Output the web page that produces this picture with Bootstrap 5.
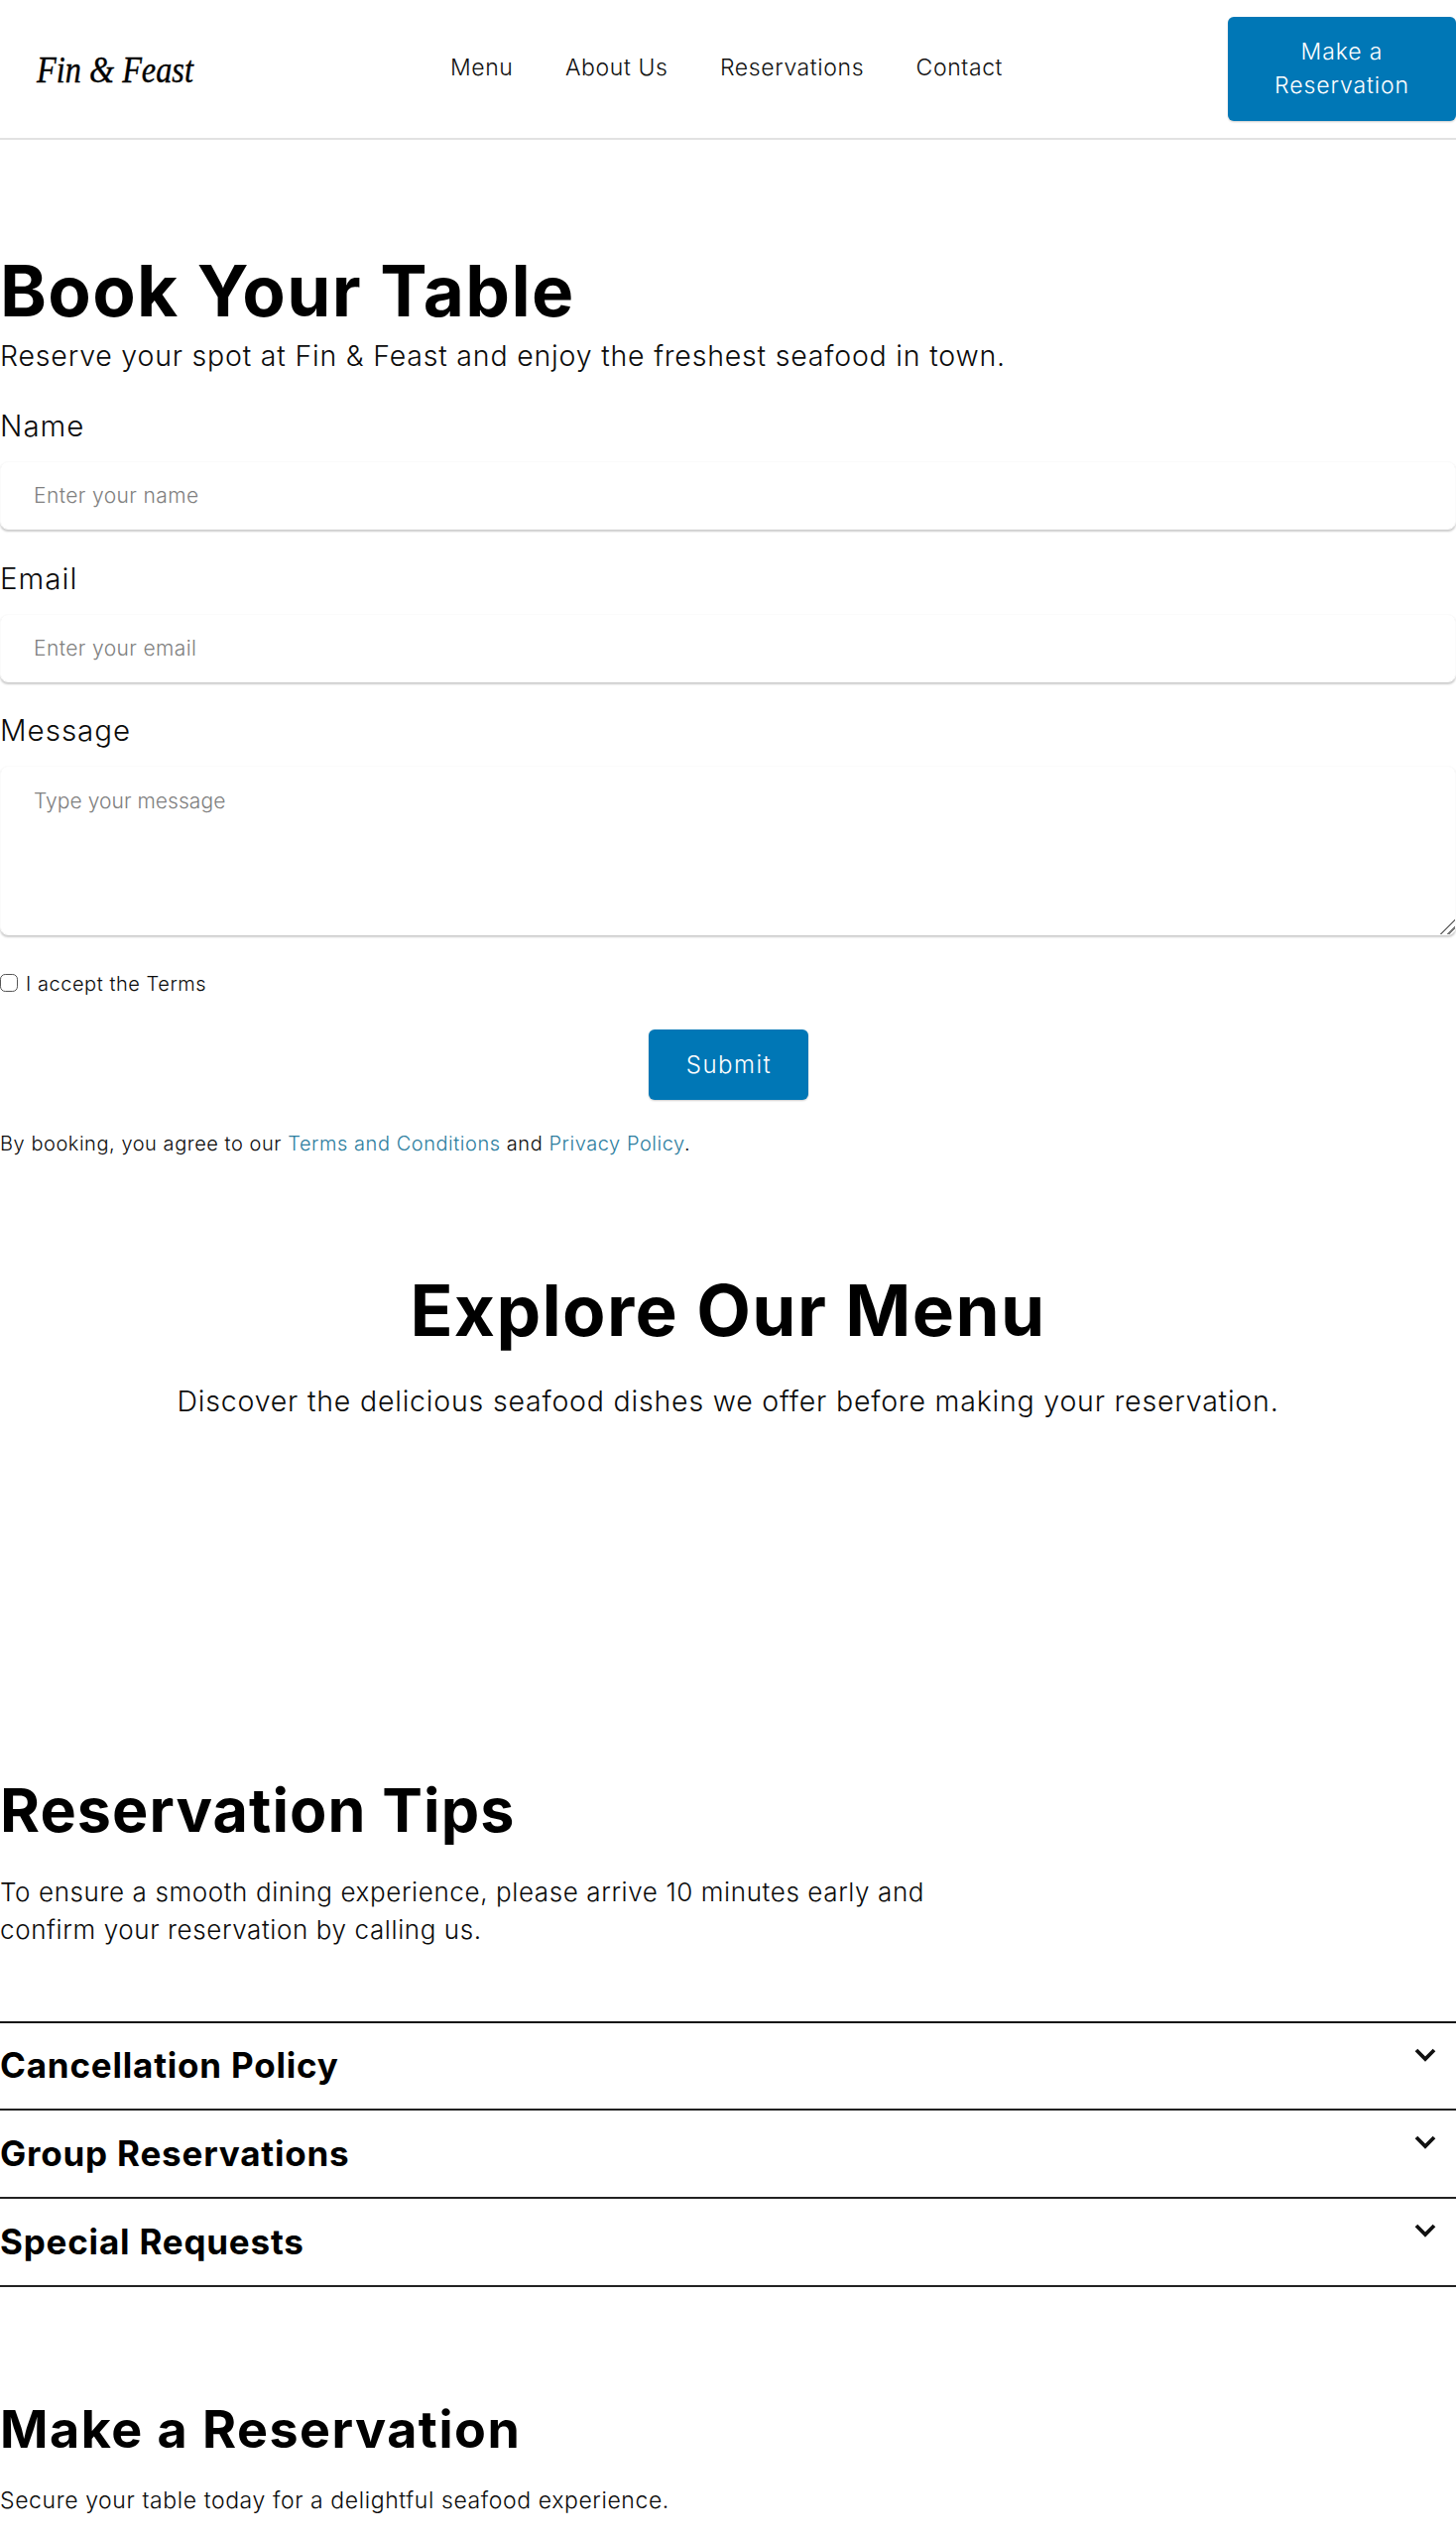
<!doctype html>
<html lang="en">
<head>
<meta charset="utf-8">
<title>Fin &amp; Feast</title>
<link href="https://cdn.jsdelivr.net/npm/bootstrap@5.3.0/dist/css/bootstrap.min.css" rel="stylesheet">
<style>
body{font-family:Inter,"Liberation Sans",sans-serif;color:#0b0b0b;background:#fff;font-size:21px;margin:0}
.ff-head{height:141px;border-bottom:2px solid #e2e2e2;padding:17px 0 17px 37px;background:#fff}
.ff-logo{font-family:"Liberation Serif",serif;font-style:italic;font-size:38px;width:417px;color:#000;text-decoration:none;line-height:1;transform:scaleX(.85);transform-origin:left center;flex:none;-webkit-text-stroke:.4px #000}
.ff-nav{gap:52.5px;width:590px;flex:none}
.ff-nav a{color:#111;text-decoration:none;font-size:23px;letter-spacing:.6px;padding:0;margin-top:-2px;font-weight:300}
.ff-btn{background:#0077b6;color:#fff;border:0;border-radius:6px;font-size:23px;letter-spacing:.9px;line-height:33.6px;font-weight:300;box-shadow:0 1px 2px rgba(0,0,0,.2)}
.ff-btn:hover,.ff-btn:focus{background:#0077b6;color:#fff}
.ff-cta{width:230px;height:105px;flex:none}
.ff-h1{font-size:71px;font-weight:700;color:#000;line-height:83px;letter-spacing:1.35px;margin:0}
.ff-sub{font-size:28.5px;font-weight:300;letter-spacing:.8px;line-height:43px;margin:2px 0 0}
.book-sec{padding-top:111px}
.ff-label{font-size:29.5px;font-weight:300;letter-spacing:1px;line-height:43.5px;display:block;margin:0 0 13.5px}
.ff-group{margin-bottom:27.5px}
.book-form{margin-top:28px}
.ff-field{border:1px solid #fbfbfb;border-radius:8px;box-shadow:0 2px 2px rgba(0,0,0,.2);font-size:21px;letter-spacing:.4px;padding:16px 33px;font-weight:300;height:69px}
.ff-field::placeholder{color:#808080}
textarea.ff-field{height:171px;padding-top:19px;letter-spacing:.05px}
textarea.ff-field::-webkit-resizer{background:linear-gradient(135deg,transparent 48%,#777 48%,#777 56%,transparent 56%,transparent 72%,#777 72%,#777 80%,transparent 80%)}
.ff-check{width:18px;height:18px;border:1.5px solid #555;border-radius:3px;margin:-3px 0 0;background-color:#fff;flex:none}
.check-row{margin-top:34px;line-height:30px}
.ff-submit{width:161px;height:71px;padding-left:14px;margin-top:31px;font-size:24px;letter-spacing:1.5px}
.ff-small{font-size:20px;font-weight:300;letter-spacing:.55px;line-height:30px;margin:0}
.ff-small a{color:#2c7d9e;text-decoration:none}
.book-note{margin-top:29px}
.menu-sec{margin-top:111.5px}
.menu-sec .ff-sub{margin-top:28px}
.tips-sec{margin-top:356px}
.ff-h2{font-size:61px;font-weight:700;color:#000;margin:0;line-height:70.8px;letter-spacing:1.1px}
.ff-p{font-size:26px;font-weight:300;letter-spacing:.6px;line-height:38.4px;margin:28.6px 0 0;max-width:960px}
.acc-list{margin-top:72px}
.ff-acc{border-bottom:2px solid #222;height:89px;padding-right:20px}
.ff-acc:first-child{border-top:2px solid #111;height:90px}
.ff-acc b{font-size:35px;font-weight:700;letter-spacing:.8px;color:#000}
.ff-acc svg{margin-top:-22px}
.cta-sec{margin-top:114px}
.ff-h3{font-size:52px;font-weight:700;color:#000;margin:0;line-height:60px;letter-spacing:1.5px}
.ff-sec{font-size:23px;font-weight:300;letter-spacing:.6px;line-height:34.5px;margin:24px 0 0}
</style>
</head>
<body>
<header class="ff-head d-flex align-items-center">
  <a class="ff-logo" href="#">Fin &amp; Feast</a>
  <nav class="ff-nav nav flex-nowrap"><a class="nav-link" href="#">Menu</a><a class="nav-link" href="#">About Us</a><a class="nav-link" href="#">Reservations</a><a class="nav-link" href="#">Contact</a></nav>
  <button class="btn ff-btn ff-cta ms-auto">Make a<br>Reservation</button>
</header>
<main>
  <section class="book-sec">
    <h1 class="ff-h1">Book Your Table</h1>
    <p class="ff-sub">Reserve your spot at Fin &amp; Feast and enjoy the freshest seafood in town.</p>
    <form class="book-form">
      <div class="ff-group"><label class="ff-label" for="n">Name</label>
      <input id="n" class="form-control ff-field" placeholder="Enter your name"></div>
      <div class="ff-group"><label class="ff-label" for="e">Email</label>
      <input id="e" class="form-control ff-field" placeholder="Enter your email"></div>
      <div><label class="ff-label" for="m">Message</label>
      <textarea id="m" class="form-control ff-field" placeholder="Type your message"></textarea></div>
      <div class="check-row d-flex align-items-center gap-2"><input type="checkbox" class="form-check-input ff-check" id="c"><label for="c" class="ff-small">I accept the Terms</label></div>
      <div class="d-flex justify-content-center"><button type="button" class="btn ff-btn ff-submit">Submit</button></div>
      <p class="ff-small book-note">By booking, you agree to our <a href="#">Terms and Conditions</a> and <a href="#">Privacy Policy</a>.</p>
    </form>
  </section>
  <section class="menu-sec text-center">
    <h2 class="ff-h1">Explore Our Menu</h2>
    <p class="ff-sub">Discover the delicious seafood dishes we offer before making your reservation.</p>
  </section>
  <section class="tips-sec">
    <h2 class="ff-h2">Reservation Tips</h2>
    <p class="ff-p">To ensure a smooth dining experience, please arrive 10 minutes early and confirm your reservation by calling us.</p>
    <div class="acc-list">
      <div class="ff-acc d-flex justify-content-between align-items-center"><b>Cancellation Policy</b><svg width="22" height="14" viewBox="0 0 22 14"><path d="M2 2l9 9 9-9" fill="none" stroke="#111" stroke-width="3.8"/></svg></div>
      <div class="ff-acc d-flex justify-content-between align-items-center"><b>Group Reservations</b><svg width="22" height="14" viewBox="0 0 22 14"><path d="M2 2l9 9 9-9" fill="none" stroke="#111" stroke-width="3.8"/></svg></div>
      <div class="ff-acc d-flex justify-content-between align-items-center"><b>Special Requests</b><svg width="22" height="14" viewBox="0 0 22 14"><path d="M2 2l9 9 9-9" fill="none" stroke="#111" stroke-width="3.8"/></svg></div>
    </div>
  </section>
  <section class="cta-sec">
    <h2 class="ff-h3">Make a Reservation</h2>
    <p class="ff-sec">Secure your table today for a delightful seafood experience.</p>
  </section>
</main>
<script src="https://cdn.jsdelivr.net/npm/bootstrap@5.3.0/dist/js/bootstrap.bundle.min.js"></script>
</body>
</html>
